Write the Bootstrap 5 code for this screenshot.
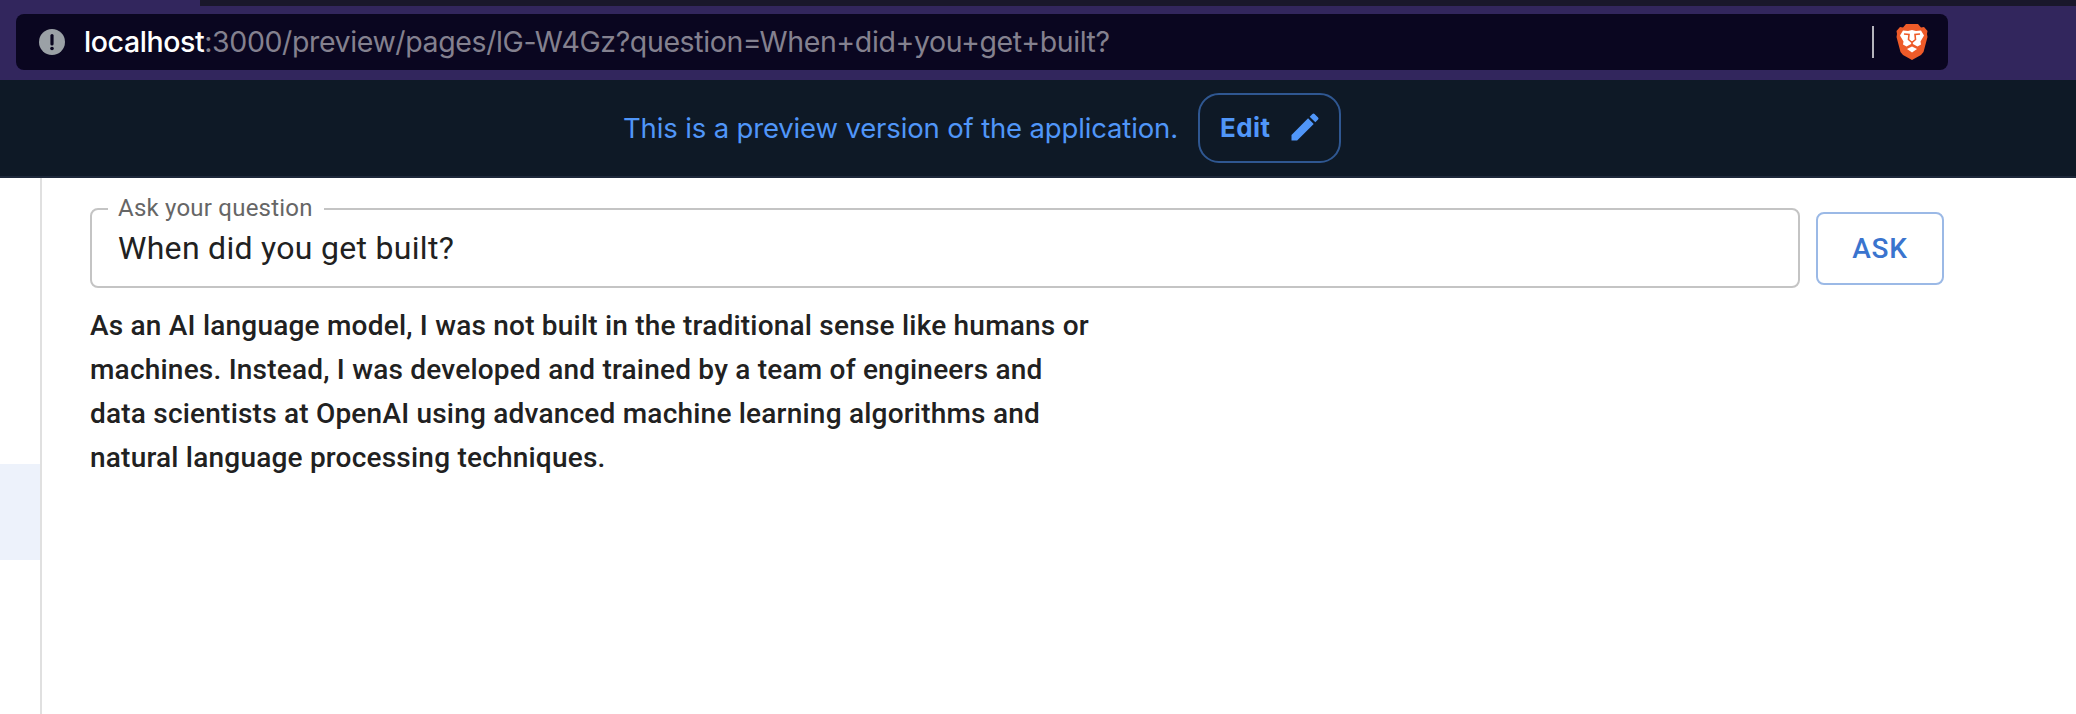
<!DOCTYPE html>
<html lang="en">
<head>
<meta charset="utf-8">
<meta name="viewport" content="width=device-width, initial-scale=1">
<title>Preview</title>
<link rel="stylesheet" href="https://cdn.jsdelivr.net/npm/bootstrap@5.3.0/dist/css/bootstrap.min.css">
<style>
body{font-family:Roboto,"Liberation Sans",sans-serif;color:#212121;background:#fff}
.chrome{height:80px;background:#32265d;padding-left:16px}
.tabstrip{height:6px;margin:0 0 8px 184px;background:#19172b}
.address{width:1932px;height:56px;border-radius:8px;background:#0a0620;padding:0 20px 0 23px;font-family:Inter,sans-serif;font-size:28.5px;line-height:56px;color:#84818f}
.url{margin-left:19px;white-space:nowrap;letter-spacing:-.39px}
.url b{font-weight:500;color:#fff;letter-spacing:-.4px}
.bar-sep{width:2px;height:32px;background:#b5b4bc;margin-right:22px}
.banner{height:98px;background:#0e1926;border-bottom:2px solid #1d283a;color:#5096f8;font-family:Inter,sans-serif;padding-left:623px;gap:21px}
.banner-text{font-size:27.5px;white-space:nowrap;width:554px;letter-spacing:-.15px;padding-top:2px}
.edit-btn{width:143px;height:70px;border:2px solid #2f5791;border-radius:21px;color:#5096f8;font-size:26px;font-weight:700;letter-spacing:.4px;padding:0 16px 2px 20px}
.rail{width:42px;border-right:2px solid #e0e0e0;padding-top:286px}
.rail-item{height:96px;background:#edf2fb}
.workspace{height:536px}
.content{padding:18px 132px 0 48px}
.question{width:1710px;height:92px;border:2px solid #c4c4c4;border-radius:8px;padding:0 0 0 16px;margin:0}
.question legend{float:none;width:216px;height:26px;margin:0;padding:0 10px;font-size:24px;line-height:24px;letter-spacing:.22px;color:#666;white-space:nowrap}
.question input{padding:0 0 0 10px;border:0;background:none;font-size:32px;line-height:40px;letter-spacing:.3px;color:#212121;box-shadow:none;height:40px;margin-top:6px}
.ask-btn{width:128px;height:73px;margin:12px 0 0 16px;border:2px solid #9bb9e6;border-radius:8px;color:#3a74ce;font-size:28px;font-weight:500;letter-spacing:.8px;padding:2px 0 0}
.answer{width:1020px;margin:16px 0 0;font-size:28px;line-height:44px;font-weight:500;letter-spacing:.21px;white-space:nowrap}
</style>
</head>
<body class="overflow-hidden">
<header class="chrome">
  <div class="tabstrip"></div>
  <div class="address d-flex align-items-center">
    <svg width="26" height="26" viewBox="0 0 26 26" class="flex-shrink-0"><circle cx="13" cy="13" r="13" fill="#9ba1a6"/><path d="M13 6.500v8.500" stroke="#0a0620" stroke-width="3.200" stroke-linecap="round"/><circle cx="13" cy="19.500" r="1.800" fill="#0a0620"/></svg>
    <div class="url flex-grow-1"><b>localhost</b>:3000/preview/pages/lG-W4Gz?question=When+did+you+get+built?</div>
    <div class="bar-sep"></div>
    <svg width="32" height="36" viewBox="0 0 32 36" class="flex-shrink-0"><path d="M10 0h12l3 3.500 3-.5 3.500 4-.5 3 .5 3-4 15-2.500 3L16 36l-9-5-2.500-3L.5 13l.500-3-.5-3 3.500-4 3 .5z" fill="#ee5b29"/><path d="M7 6.500l5 .5 4-1 4 1 5-.5 3 5-3.500 6 .500 3-3.500 2L16 19.500 10.500 22.500 7 20.500l.5-3-3.500-6z" fill="#fff"/><path d="M16 22.500l5 2.500-5 3.500-5-3.500z" fill="#fff"/><path d="M8 10l5 .5-.5 5 3.500 3 3.500-3-.5-5 5-.5M16 18v3" fill="none" stroke="#ee5b29" stroke-width="1.600"/></svg>
  </div>
</header>
<section class="banner d-flex align-items-center">
  <div class="banner-text">This is a preview version of the application.</div>
  <button class="btn edit-btn d-flex align-items-center justify-content-between">Edit
    <svg width="36" height="36" viewBox="0 0 24 24" fill="currentColor"><path d="M3 17.250V21h3.750L17.810 9.940l-3.750-3.750L3 17.250zM20.710 7.040a1 1 0 0 0 0-1.410l-2.340-2.340a1 1 0 0 0-1.410 0l-1.830 1.830 3.750 3.750 1.830-1.830z"/></svg>
  </button>
</section>
<main class="workspace d-flex">
  <aside class="rail flex-shrink-0"><div class="rail-item"></div></aside>
  <div class="content flex-grow-1">
    <form class="d-flex align-items-center">
      <fieldset class="question">
        <legend>Ask your question</legend>
        <input class="form-control" type="text" value="When did you get built?" aria-label="Ask your question">
      </fieldset>
      <button class="btn ask-btn" type="button">ASK</button>
    </form>
    <p class="answer">As an AI language model, I was not built in the traditional sense like humans or<br>machines. Instead, I was developed and trained by a team of engineers and<br>data scientists at OpenAI using advanced machine learning algorithms and<br>natural language processing techniques.</p>
  </div>
</main>
<script src="https://cdn.jsdelivr.net/npm/bootstrap@5.3.0/dist/js/bootstrap.bundle.min.js"></script>
</body>
</html>
